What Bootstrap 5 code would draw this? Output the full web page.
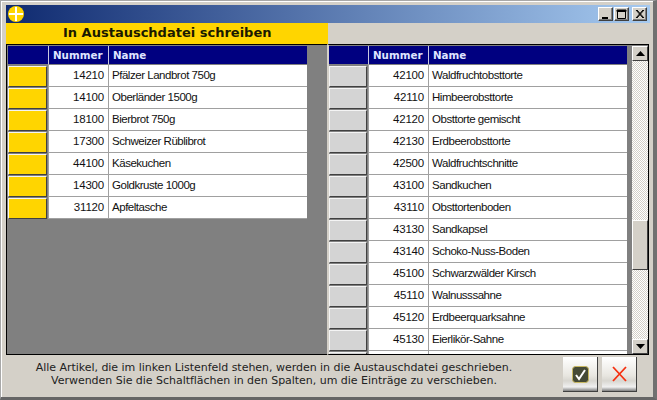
<!DOCTYPE html>
<html lang="de">
<head>
  <meta charset="UTF-8">
  <meta name="viewport" content="width=device-width, initial-scale=1.0">
  <title>In Austauschdatei schreiben</title>
  <link href="https://cdn.jsdelivr.net/npm/bootstrap@5.3.3/dist/css/bootstrap.min.css" rel="stylesheet">
  <style>
    html, body {
      width: 657px;
      height: 400px;
      overflow: hidden;
      background: #d4d0c8;
    }
    .win {
      width: 657px;
      height: 400px;
      background: #d4d0c8;
      border-style: solid;
      border-width: 1px 4px 3px 1px;
      border-color: #a8a8a8 #707070 #666 #a8a8a8;
      box-shadow: inset 1px 1px 0 #fff;
      padding: 4px 3px 0 5px;
    }
    .titlebar {
      height: 18px;
      background: linear-gradient(90deg, #0f2a70, #a6caf0);
      padding: 0 3px 0 2px;
    }
    .app-icon { width: 16px; height: 16px; }
    .cap-btn {
      width: 15px;
      height: 14px;
      background: #d4d0c8;
      border: 1px solid;
      border-color: #fff #404040 #404040 #fff;
      box-shadow: inset -1px -1px 0 #808080;
    }
    .cap-btn svg { display: block; }
    .cap-gap { margin-left: 1px; }
    .cap-gap-wide { margin-left: 3px; }
    .head-row { height: 21px; }
    .yellow-head {
      width: 322px;
      background: #ffd500;
      color: #1a1a00;
      font: bold 13px "DejaVu Sans", sans-serif;
      line-height: 20px;
      padding-left: 57px;
    }
    .panes { height: 311px; }
    .grid-left, .grid-right {
      background: #808080;
      border-style: solid;
      border-width: 1px 0 1px 0;
      border-color: #000;
      overflow: hidden;
    }
    .grid-left { width: 321px; padding: 1px 0 0 1px; border-left: 1px solid #000; }
    .grid-right { width: 322px; padding: 1px 0 0 0; border-left: 2px solid #d4d0c8; border-right: 1px solid #000; }
    .art-table {
      table-layout: fixed;
      border-collapse: separate;
      border-spacing: 0;
      width: 299px;
      font: 11.5px "Liberation Sans", sans-serif;
      margin: 0;
    }
    .grid-right .art-table { width: 298px; }
    .art-table th {
      height: 19px;
      padding: 0 0 1px 4px;
      background: #000080;
      color: #dfe4ff;
      font: bold 10.3px "DejaVu Sans", sans-serif;
      border-left: 1px solid #c8c8e0;
      border-bottom: 1px solid #808080;
    }
    .art-table th:first-child { border-left: 0; }
    .art-table td {
      height: 22px;
      padding: 0 0 1px 3px;
      background: #fff;
      color: #111;
      border-left: 1px solid #a0a0a0;
      border-bottom: 1px solid #a0a0a0;
      white-space: nowrap;
      letter-spacing: -0.47px;
    }
    .art-table td.num { text-align: right; padding: 0 4px 1px 0; letter-spacing: -0.2px; }
    .art-table td.pick {
      padding: 0;
      border-left: 0;
      border-bottom: 0;
      background: #808080;
    }
    .pick-btn {
      display: block;
      width: 39px;
      height: 21px;
      padding: 0;
      border: 1px solid;
      border-color: #f4f4f4 #404040 #404040 #f4f4f4;
      border-radius: 0;
    }
    .pick-yellow { background: #ffd500; }
    .pick-grey { background: #d4d4d4; width: 38px; }
    .scroll-col {
      width: 16px;
      margin-left: 5px;
      background-color: #eae8e4;
      background-image: url("data:image/svg+xml,%3Csvg xmlns='http://www.w3.org/2000/svg' width='2' height='2' shape-rendering='crispEdges'%3E%3Crect width='2' height='2' fill='%23fff'/%3E%3Crect width='1' height='1' fill='%23d4d0c8'/%3E%3Crect x='1' y='1' width='1' height='1' fill='%23d4d0c8'/%3E%3C/svg%3E");
      background-size: 2px 2px;
    }
    .scroll-btn {
      width: 16px;
      height: 15px;
      background: #d4d0c8;
      border: 1px solid;
      border-color: #fff #404040 #404040 #fff;
    }
    .scroll-thumb {
      width: 16px;
      height: 50px;
      margin-top: 159px;
      background: #d4d0c8;
      border: 1px solid;
      border-color: #fff #404040 #404040 #fff;
    }
    .scroll-btn-end { margin-top: 69px; }
    .foot-row { height: 42px; }
    .foot-text {
      width: 557px;
      font: 11px "DejaVu Sans", sans-serif;
      letter-spacing: -0.03px;
      line-height: 13px;
      color: #222;
      text-align: center;
      padding: 6px 21px 0 0;
    }
    .foot-btns { padding-top: 2px; }
    .foot-btn {
      width: 35px;
      height: 35px;
      padding: 0;
      border: 0;
      border-radius: 0;
      border-right: 1px solid #404040;
      border-bottom: 1px solid #404040;
      background: linear-gradient(180deg, #fff 0, #e8e6e0 55%, #d8d6d0 70%, #f0f0f0 88%, #808080 100%);
    }
  </style>
</head>
<body class="m-0">
  <div class="win d-flex flex-column">
    <div class="titlebar d-flex align-items-center justify-content-between">
      <svg class="app-icon" viewBox="0 0 16 16">
        <circle cx="8" cy="8" r="8" fill="#ffd500"/>
        <rect x="7" y="1" width="2" height="14" fill="#fff"/>
        <rect x="1" y="7" width="14" height="2" fill="#fff"/>
      </svg>
      <div class="d-flex">
        <div class="cap-btn"><svg width="13" height="12"><rect x="3" y="9" width="6" height="2" fill="#000"/></svg></div>
        <div class="cap-btn cap-gap"><svg width="13" height="12"><path d="M2.5 2.5h8v8h-8z M2 2h9v1.5H2z" fill="none" stroke="#000"/></svg></div>
        <div class="cap-btn cap-gap-wide"><svg width="13" height="12"><path d="M3 2l7 8M4 2l7 8M10 2l-7 8M11 2l-7 8" stroke="#000"/></svg></div>
      </div>
    </div>
    <div class="head-row d-flex">
      <div class="yellow-head">In Austauschdatei schreiben</div>
    </div>
    <div class="panes d-flex">
      <div class="grid-left">
        <table class="art-table">
          <colgroup><col style="width:40px"><col style="width:60px"><col></colgroup>
          <thead><tr><th></th><th>Nummer</th><th>Name</th></tr></thead>
          <tbody>
            <tr><td class="pick"><button class="pick-btn pick-yellow"></button></td><td class="num">14210</td><td>Pfälzer Landbrot 750g</td></tr>
            <tr><td class="pick"><button class="pick-btn pick-yellow"></button></td><td class="num">14100</td><td>Oberländer 1500g</td></tr>
            <tr><td class="pick"><button class="pick-btn pick-yellow"></button></td><td class="num">18100</td><td>Bierbrot 750g</td></tr>
            <tr><td class="pick"><button class="pick-btn pick-yellow"></button></td><td class="num">17300</td><td>Schweizer Rüblibrot</td></tr>
            <tr><td class="pick"><button class="pick-btn pick-yellow"></button></td><td class="num">44100</td><td>Käsekuchen</td></tr>
            <tr><td class="pick"><button class="pick-btn pick-yellow"></button></td><td class="num">14300</td><td>Goldkruste 1000g</td></tr>
            <tr><td class="pick"><button class="pick-btn pick-yellow"></button></td><td class="num">31120</td><td>Apfeltasche</td></tr>
          </tbody>
        </table>
      </div>
      <div class="grid-right d-flex">
        <table class="art-table align-self-start">
          <colgroup><col style="width:39px"><col style="width:60px"><col></colgroup>
          <thead><tr><th></th><th>Nummer</th><th>Name</th></tr></thead>
          <tbody>
            <tr><td class="pick"><button class="pick-btn pick-grey"></button></td><td class="num">42100</td><td>Waldfruchtobsttorte</td></tr>
            <tr><td class="pick"><button class="pick-btn pick-grey"></button></td><td class="num">42110</td><td>Himbeerobsttorte</td></tr>
            <tr><td class="pick"><button class="pick-btn pick-grey"></button></td><td class="num">42120</td><td>Obsttorte gemischt</td></tr>
            <tr><td class="pick"><button class="pick-btn pick-grey"></button></td><td class="num">42130</td><td>Erdbeerobsttorte</td></tr>
            <tr><td class="pick"><button class="pick-btn pick-grey"></button></td><td class="num">42500</td><td>Waldfruchtschnitte</td></tr>
            <tr><td class="pick"><button class="pick-btn pick-grey"></button></td><td class="num">43100</td><td>Sandkuchen</td></tr>
            <tr><td class="pick"><button class="pick-btn pick-grey"></button></td><td class="num">43110</td><td>Obsttortenboden</td></tr>
            <tr><td class="pick"><button class="pick-btn pick-grey"></button></td><td class="num">43130</td><td>Sandkapsel</td></tr>
            <tr><td class="pick"><button class="pick-btn pick-grey"></button></td><td class="num">43140</td><td>Schoko-Nuss-Boden</td></tr>
            <tr><td class="pick"><button class="pick-btn pick-grey"></button></td><td class="num">45100</td><td>Schwarzwälder Kirsch</td></tr>
            <tr><td class="pick"><button class="pick-btn pick-grey"></button></td><td class="num">45110</td><td>Walnusssahne</td></tr>
            <tr><td class="pick"><button class="pick-btn pick-grey"></button></td><td class="num">45120</td><td>Erdbeerquarksahne</td></tr>
            <tr><td class="pick"><button class="pick-btn pick-grey"></button></td><td class="num">45130</td><td>Eierlikör-Sahne</td></tr>
            <tr><td class="pick"><button class="pick-btn pick-grey"></button></td><td class="num"></td><td></td></tr>
          </tbody>
        </table>
        <div class="scroll-col">
          <div class="scroll-btn d-flex align-items-center justify-content-center"><svg width="9" height="5"><path d="M4.5 0L9 5H0z" fill="#000"/></svg></div>
          <div class="scroll-thumb"></div>
          <div class="scroll-btn scroll-btn-end d-flex align-items-center justify-content-center"><svg width="9" height="5"><path d="M0 0h9L4.5 5z" fill="#000"/></svg></div>
        </div>
      </div>
    </div>
    <div class="foot-row d-flex">
      <div class="foot-text">Alle Artikel, die im linken Listenfeld stehen, werden in die Austauschdatei geschrieben.<br>Verwenden Sie die Schaltflächen in den Spalten, um die Einträge zu verschieben.</div>
      <div class="foot-btns d-flex gap-1">
        <button class="foot-btn d-flex align-items-center justify-content-center">
          <svg width="17" height="17" viewBox="0 0 17 17"><rect x="0.5" y="0.5" width="16" height="16" rx="3" fill="#454a36" stroke="#c8b860"/><path d="M4 9l3 4 6-9" fill="none" stroke="#fff" stroke-width="2"/></svg>
        </button>
        <button class="foot-btn d-flex align-items-center justify-content-center">
          <svg width="15" height="16" viewBox="0 0 15 16"><path d="M1 1l13 14M14 1L1 15" fill="none" stroke="#f53010" stroke-width="1.8"/></svg>
        </button>
      </div>
    </div>
  </div>
  <script src="https://cdn.jsdelivr.net/npm/bootstrap@5.3.3/dist/js/bootstrap.bundle.min.js"></script>
</body>
</html>
